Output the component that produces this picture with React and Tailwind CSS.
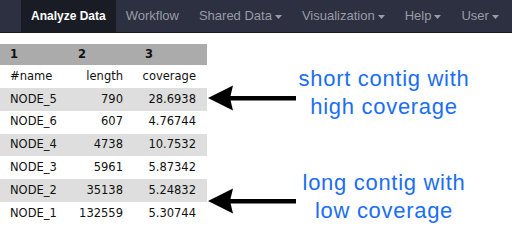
import React from "react";

const navItems = [
  { label: "Analyze Data", active: true },
  { label: "Workflow" },
  { label: "Shared Data", caret: true },
  { label: "Visualization", caret: true },
  { label: "Help", caret: true },
  { label: "User", caret: true },
];

const rows = [
  ["NODE_5", "790", "28.6938"],
  ["NODE_6", "607", "4.76744"],
  ["NODE_4", "4738", "10.7532"],
  ["NODE_3", "5961", "5.87342"],
  ["NODE_2", "35138", "5.24832"],
  ["NODE_1", "132559", "5.30744"],
];

function Caret() {
  return (
    <svg width="7" height="4" viewBox="0 0 7 4" className="ml-[3px] mt-[1px]">
      <path d="M0 0 L7 0 L3.5 4 Z" fill="#9a9ca6" />
    </svg>
  );
}

function Arrow({ className }) {
  return (
    <svg width="88" height="26" viewBox="0 0 88 26" className={className}>
      <path d="M0 13 L25 0.5 L22 13 L25 25.5 Z" fill="#000" />
      <rect x="20" y="11" width="68" height="4.5" fill="#000" />
    </svg>
  );
}

function Note({ lines, className, arrowClass }) {
  return (
    <div className={`flex items-start ${className}`}>
      <Arrow className={`shrink-0 ml-[1px] ${arrowClass}`} />
      <div className="w-[176px] text-center text-[22px] leading-[28px] tracking-[0.7px] text-[#1b6ef3] font-['Liberation_Sans',Arial,sans-serif]">
        {lines.map((l) => (
          <div key={l}>{l}</div>
        ))}
      </div>
    </div>
  );
}

export default function App() {
  return (
    <div className="w-[512px] h-[249px] bg-white overflow-hidden">
      <nav className="h-[33px] bg-[#2c3040] border-b border-[#181a22] flex items-stretch pl-[21px] font-['Liberation_Sans',Arial,sans-serif]">
        {navItems.map((item) => (
          <div
            key={item.label}
            className={
              item.active
                ? "flex items-center px-[10px] bg-[#1a1c25] text-white font-bold text-[12px]"
                : "flex items-center px-[10px] text-[#9a9ca6] text-[13px]"
            }
          >
            {item.label}
            {item.caret && <Caret />}
          </div>
        ))}
      </nav>

      <div className="flex pt-[11px]">
        <table className="w-[207px] border-collapse text-[11.5px] text-[#111] font-['DejaVu_Sans',Verdana,sans-serif] shrink-0">
          <thead>
            <tr className="bg-[#ababab] h-[21px] font-bold">
              <th className="w-[68px] pl-[10px] text-left">1</th>
              <th className="w-[67px] pl-[10px] text-left">2</th>
              <th className="w-[72px] pl-[10px] text-left">3</th>
            </tr>
          </thead>
          <tbody>
            <tr className="h-[21px]">
              <td className="pl-[10px]">#name</td>
              <td className="pr-[12px] text-right">length</td>
              <td className="pr-[11px] text-right">coverage</td>
            </tr>
            {rows.map((r, i) => (
              <tr key={r[0]} className={i % 2 === 0 ? "h-[21px] bg-[#dedede]" : "h-[21px]"}>
                <td className="pl-[10px]">{r[0]}</td>
                <td className="pr-[12px] text-right">{r[1]}</td>
                <td className="pr-[11px] text-right">{r[2]}</td>
              </tr>
            ))}
          </tbody>
        </table>

        <div className="flex flex-col">
          <Note
            className="mt-[21px]"
            arrowClass="mt-[20px]"
            lines={["short contig with", "high coverage"]}
          />
          <Note
            className="mt-[48px]"
            arrowClass="mt-[19px]"
            lines={["long contig with", "low coverage"]}
          />
        </div>
      </div>
    </div>
  );
}
